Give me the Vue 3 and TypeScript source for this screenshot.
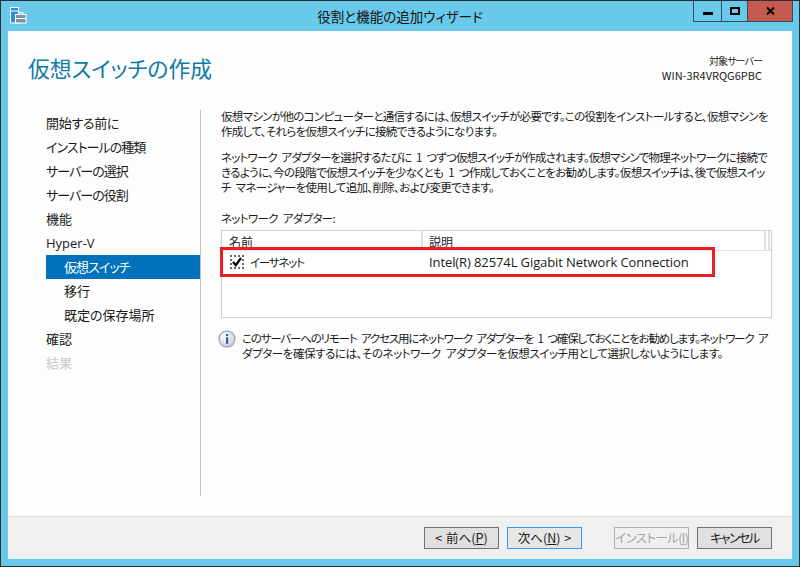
<script setup lang="ts">
const steps = [
  { label: '開始する前に', cls: 'snug' },
  { label: 'インストールの種類', cls: 'tight' },
  { label: 'サーバーの選択', cls: 'tight' },
  { label: 'サーバーの役割', cls: 'tight' },
  { label: '機能', cls: '' },
  { label: 'Hyper-V', cls: 'latin' },
  { label: '仮想スイッチ', cls: 'sub active tight' },
  { label: '移行', cls: 'sub' },
  { label: '既定の保存場所', cls: 'sub' },
  { label: '確認', cls: '' },
  { label: '結果', cls: 'disabled' },
]
</script>

<template>
  <div class="window">
    <header class="titlebar">
      <svg class="app-icon" width="17" height="17" viewBox="0 0 17 17">
        <rect x="0.5" y="0.5" width="8" height="15.5" fill="#2f8fdc" stroke="#fff" />
        <rect x="1" y="3.5" width="7" height="1" fill="#fff" />
        <rect x="5.5" y="7.5" width="10.5" height="8.5" fill="#7d8fa0" stroke="#fff" />
        <path d="M8.5 7.5V5.5h4.5v2" fill="none" stroke="#fff" />
        <rect x="6" y="11" width="10" height="1" fill="#fff" />
      </svg>
      <span class="title">役割と機能の追加ウィザード</span>
      <div class="controls">
        <button class="ctl min" aria-label="最小化"><i></i></button>
        <button class="ctl max" aria-label="最大化"><i></i></button>
        <button class="ctl close" aria-label="閉じる">
          <svg width="9" height="8" viewBox="0 0 9 8"><path d="M1 0.5 L8 7.5 M8 0.5 L1 7.5" stroke="#000" stroke-width="2" fill="none" /></svg>
        </button>
      </div>
    </header>

    <div class="client">
      <div class="head">
        <h1>仮想スイッチの作成</h1>
        <div class="target">
          <div class="target-label">対象サーバー</div>
          <div>WIN-3R4VRQG6PBC</div>
        </div>
      </div>

      <div class="body">
        <nav class="nav">
          <div v-for="s in steps" :key="s.label" class="step" :class="s.cls">{{ s.label }}</div>
        </nav>
        <main class="main">
          <p class="p1">仮想マシンが他のコンピューターと通信するには、仮想スイッチが必要です。この役割をインストールすると、仮想マシンを<br />作成して、それらを仮想スイッチに接続できるようになります。</p>
          <p class="p2"><span class="narrow">ネットワーク アダプターを選択するたびに 1 つずつ仮想スイッチが作成されます。仮想マシンで物理ネットワークに接続で</span><br />きるように、今の段階で仮想スイッチを少なくとも 1 つ作成しておくことをお勧めします。仮想スイッチは、後で仮想スイッ<br />チ マネージャーを使用して追加、削除、および変更できます。</p>
          <div class="label">ネットワーク アダプター:</div>
          <div class="table">
            <div class="thead">
              <div class="th name">名前</div>
              <div class="th desc">説明</div>
              <div class="th rest"></div>
            </div>
            <div class="row">
              <span class="check">
                <svg width="10" height="10" viewBox="0 0 10 10"><path d="M1 5 L3.8 8.2 L9 1" fill="none" stroke="#000" stroke-width="2.2" /></svg>
              </span>
              <span class="cell-name">イーサネット</span>
              <span class="cell-desc">Intel(R) 82574L Gigabit Network Connection</span>
            </div>
            <div class="highlight"></div>
          </div>
          <div class="info">
            <svg class="info-icon" width="18" height="18" viewBox="0 0 18 18">
              <defs>
                <radialGradient id="ig" cx="35%" cy="30%" r="80%">
                  <stop offset="0" stop-color="#ffffff" />
                  <stop offset="1" stop-color="#c2cad6" />
                </radialGradient>
              </defs>
              <circle cx="9" cy="9" r="8" fill="url(#ig)" stroke="#a7aeb8" stroke-width="1.4" />
              <rect x="8" y="4" width="2.2" height="2" fill="#2a5fb0" />
              <rect x="8" y="7.2" width="2.2" height="6.6" fill="#2a5fb0" />
            </svg>
            <p><span class="narrower">このサーバーへのリモート アクセス用にネットワーク アダプターを 1 つ確保しておくことをお勧めします。ネットワーク ア</span><br /><span class="loose">ダプターを確保するには、そのネットワーク アダプターを仮想スイッチ用として選択しないようにします。</span></p>
          </div>
        </main>
      </div>

      <footer class="footer">
        <button class="btn">&lt; 前へ(<u>P</u>)</button>
        <button class="btn default">次へ(<u>N</u>) &gt;</button>
        <button class="btn off" disabled>インストール(<u>I</u>)</button>
        <button class="btn cancel">キャンセル</button>
      </footer>
    </div>
  </div>
</template>

<style scoped>
.window {
  width: 800px;
  height: 567px;
  box-sizing: border-box;
  border: 1px solid #2b2f33;
  background: #69c9ea;
  display: flex;
  flex-direction: column;
  font-family: "Noto Sans CJK JP", "Noto Sans", sans-serif;
  font-size: 11.5px;
  letter-spacing: -0.67px;
  word-spacing: 3px;
  font-feature-settings: "palt";
  color: #1a1a1a;
  overflow: hidden;
}
.narrow { letter-spacing: -0.84px; }
.narrower { letter-spacing: -1.17px; }
.loose { letter-spacing: -0.43px; }
.titlebar {
  height: 30px;
  flex: none;
  display: flex;
  position: relative;
  justify-content: center;
  padding-top: 5px;
  box-sizing: border-box;
}
.app-icon {
  position: absolute;
  left: 9px;
  top: 6px;
}
.title {
  font-size: 13.5px;
  letter-spacing: 0;
  line-height: 20px;
  color: #111;
}
.controls {
  position: absolute;
  right: 6px;
  top: -1px;
  display: flex;
  height: 22px;
  border: 1px solid #2f4e5e;
  border-top: 0;
  box-sizing: border-box;
}
.ctl {
  padding: 0;
  border: 0;
  background: #69c9ea;
  display: flex;
  align-items: center;
  justify-content: center;
}
.min { width: 28px; border-right: 1px solid #2f4e5e; }
.max { width: 26px; border-right: 1px solid #2f4e5e; }
.close { width: 44px; background: #c75a50; }
.min i { display: block; width: 10px; height: 3px; background: #000; margin-top: 5px; }
.max i { display: block; width: 10px; height: 8px; box-sizing: border-box; border: 2px solid #000; }
.client {
  flex: 1;
  margin: 0 7px 7px;
  background: #fdfdfd;
  display: flex;
  flex-direction: column;
  min-height: 0;
}
.head {
  height: 79px;
  flex: none;
  display: flex;
  justify-content: space-between;
  padding: 17px 0 0 20px;
  box-sizing: border-box;
}
h1 {
  margin: 0;
  font-size: 21.8px;
  letter-spacing: 0;
  font-weight: 400;
  line-height: 40px;
  color: #0d7ba6;
}
.target {
  margin: 6px 30px 0 0;
  text-align: right;
  font-size: 11px;
  letter-spacing: 0;
  line-height: 14px;
  color: #222;
}
.target-label { font-size: 10px; letter-spacing: -0.9px; }
.body {
  flex: 1;
  display: flex;
  min-height: 0;
}
.nav {
  width: 193px;
  flex: none;
  box-sizing: border-box;
  height: 386px;
  border-right: 1px solid #c4c4c4;
  padding-top: 1px;
}
.step {
  height: 24px;
  line-height: 24px;
  margin-left: 38px;
  font-size: 13px;
  letter-spacing: 0;
}
.step.snug { letter-spacing: -0.3px; }
.step.tight { letter-spacing: -0.95px; }
.step.latin { font-family: "Open Sans", sans-serif; }
.step.sub { padding-left: 18px; }
.step.active { background: #0072bc; color: #fff; }
.step.disabled { color: #c8c8c8; }
.main {
  flex: 1;
  padding: 0 20px;
  min-width: 0;
  margin-top: -1px;
}
p { margin: 0; line-height: 15px; white-space: nowrap; }
.p2 { margin-top: 11px; }
.label { margin-top: 16px; line-height: 15px; }
.table {
  position: relative;
  margin-top: 4px;
  height: 88px;
  width: 551px;
  box-sizing: border-box;
  border: 1px solid #cfcfcf;
  background: #fff;
}
.thead {
  display: flex;
  height: 19px;
  border-bottom: 1px solid #e2e2e2;
}
.th {
  height: 19px;
  line-height: 21px;
  padding-left: 7px;
  font-size: 12px;
  letter-spacing: 0;
  box-sizing: border-box;
  border-right: 2px solid #e0e0e0;
  overflow: hidden;
}
.name { width: 201px; }
.desc { width: 343px; padding-left: 6px; }
.rest { width: 4px; padding: 0; }
.row {
  display: flex;
  align-items: center;
  height: 22px;
  padding-left: 8px;
  position: relative;
}
.check {
  width: 14px;
  height: 14px;
  box-sizing: border-box;
  border: 2px dotted #6a6a6a;
  background: #fff;
  display: flex;
  align-items: center;
  justify-content: center;
}
.cell-name { margin-left: 6px; width: 179px; letter-spacing: -1.2px; }
.cell-desc { font-family: "Open Sans", "Noto Sans", sans-serif; font-size: 13px; letter-spacing: -0.1px; word-spacing: 0; }
.highlight {
  position: absolute;
  left: -2px;
  top: 16px;
  width: 495px;
  height: 30px;
  box-sizing: border-box;
  border: 3px solid #ee1c25;
  pointer-events: none;
}
.info {
  display: flex;
  margin-top: 13px;
  gap: 6px;
  align-items: flex-start;
}
.info-icon { flex: none; margin-top: -1px; margin-left: -3px; }
.footer {
  height: 43px;
  flex: none;
  box-sizing: border-box;
  background: #f0f0f0;
  border-top: 1px solid #dcdcdc;
  display: flex;
  align-items: flex-start;
  padding: 10px 20px 0 416px;
}
.btn {
  width: 75px;
  height: 22px;
  box-sizing: border-box;
  border: 1px solid #707070;
  background: #e0e0e0;
  font: inherit;
  font-feature-settings: inherit;
  font-size: 12.5px;
  letter-spacing: 0;
  word-spacing: 1px;
  line-height: 18px;
  padding: 0;
  color: #1a1a1a;
  margin-right: 8px;
  white-space: nowrap;
}
.btn.default { border-color: #3399ff; background: #e6e6e6; margin-right: 32px; }
.btn.off { border-color: #b0b0b0; background: #f0f0f0; color: #a6a6a6; letter-spacing: -0.6px; }
.btn.cancel { letter-spacing: -1.6px; margin-right: 0; }
</style>

<style>
html, body { margin: 0; padding: 0; background: #69c9ea; }
</style>
